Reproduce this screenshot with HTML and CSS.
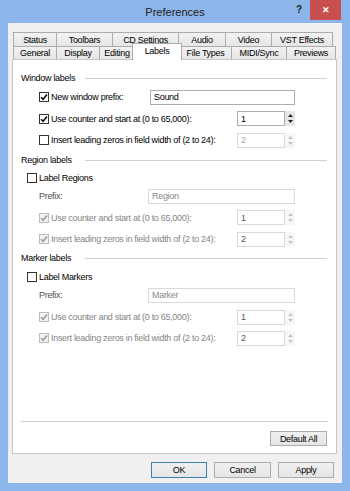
FILE: index.html
```html
<!DOCTYPE html>
<html>
<head>
<meta charset="utf-8">
<title>Preferences</title>
<link rel="stylesheet" href="styles.css">
</head>
<body>
<div class="window">
  <div class="titlebar">
    <div class="title">Preferences</div>
    <div class="ctrls">
      <div class="help">?</div>
      <div class="close">✕</div>
    </div>
  </div>
  <div class="client">
    <div class="tabs">
      <div class="tabrow row1">
        <div class="tab">Status</div>
        <div class="tab">Toolbars</div>
        <div class="tab">CD Settings</div>
        <div class="tab">Audio</div>
        <div class="tab">Video</div>
        <div class="tab">VST Effects</div>
      </div>
      <div class="tabrow row2">
        <div class="tab">General</div>
        <div class="tab">Display</div>
        <div class="tab">Editing</div>
        <div class="tab sel">Labels</div>
        <div class="tab">File Types</div>
        <div class="tab">MIDI/Sync</div>
        <div class="tab">Previews</div>
      </div>
    </div>
    <div class="panel">
      <div class="grid">
        <div class="hdr"><span>Window labels</span><i class="line"></i></div>
        <div class="row ind2">
          <span class="cb"><svg viewBox="0 0 8 8" width="8" height="8"><path d="M1 4.2 L3.1 6.3 L7 1.4" /></svg></span>
          <span class="lbl">New window prefix:</span>
          <div class="edit">Sound</div>
        </div>
        <div class="row ind2">
          <span class="cb"><svg viewBox="0 0 8 8" width="8" height="8"><path d="M1 4.2 L3.1 6.3 L7 1.4" /></svg></span>
          <span class="lbl">Use counter and start at (0 to 65,000):</span>
          <div class="spin"><div class="val">1</div><div class="arr"><svg viewBox="0 0 5 3" width="5" height="3"><path d="M0 3 L2.5 0 L5 3 Z"/></svg><svg viewBox="0 0 5 3" width="5" height="3"><path d="M0 0 L2.5 3 L5 0 Z"/></svg></div></div>
        </div>
        <div class="row ind2">
          <span class="cb"></span>
          <span class="lbl">Insert leading zeros in field width of (2 to 24):</span>
          <div class="spin dis light"><div class="val">2</div><div class="arr"><svg viewBox="0 0 5 3" width="5" height="3"><path d="M0 3 L2.5 0 L5 3 Z"/></svg><svg viewBox="0 0 5 3" width="5" height="3"><path d="M0 0 L2.5 3 L5 0 Z"/></svg></div></div>
        </div>

        <div class="hdr"><span>Region labels</span><i class="line"></i></div>
        <div class="row ind1">
          <span class="cb"></span>
          <span class="lbl">Label Regions</span>
        </div>
        <div class="row ind2">
          <span class="lbl semi">Prefix:</span>
          <div class="edit dis wide">Region</div>
        </div>
        <div class="row ind2">
          <span class="cb dis"><svg viewBox="0 0 8 8" width="8" height="8"><path d="M1 4.2 L3.1 6.3 L7 1.4" /></svg></span>
          <span class="lbl dim">Use counter and start at (0 to 65,000):</span>
          <div class="spin dis"><div class="val">1</div><div class="arr"><svg viewBox="0 0 5 3" width="5" height="3"><path d="M0 3 L2.5 0 L5 3 Z"/></svg><svg viewBox="0 0 5 3" width="5" height="3"><path d="M0 0 L2.5 3 L5 0 Z"/></svg></div></div>
        </div>
        <div class="row ind2">
          <span class="cb dis"><svg viewBox="0 0 8 8" width="8" height="8"><path d="M1 4.2 L3.1 6.3 L7 1.4" /></svg></span>
          <span class="lbl dim">Insert leading zeros in field width of (2 to 24):</span>
          <div class="spin dis"><div class="val">2</div><div class="arr"><svg viewBox="0 0 5 3" width="5" height="3"><path d="M0 3 L2.5 0 L5 3 Z"/></svg><svg viewBox="0 0 5 3" width="5" height="3"><path d="M0 0 L2.5 3 L5 0 Z"/></svg></div></div>
        </div>

        <div class="hdr"><span>Marker labels</span><i class="line"></i></div>
        <div class="row ind1">
          <span class="cb"></span>
          <span class="lbl">Label Markers</span>
        </div>
        <div class="row ind2">
          <span class="lbl semi">Prefix:</span>
          <div class="edit dis wide">Marker</div>
        </div>
        <div class="row ind2">
          <span class="cb dis"><svg viewBox="0 0 8 8" width="8" height="8"><path d="M1 4.2 L3.1 6.3 L7 1.4" /></svg></span>
          <span class="lbl dim">Use counter and start at (0 to 65,000):</span>
          <div class="spin dis"><div class="val">1</div><div class="arr"><svg viewBox="0 0 5 3" width="5" height="3"><path d="M0 3 L2.5 0 L5 3 Z"/></svg><svg viewBox="0 0 5 3" width="5" height="3"><path d="M0 0 L2.5 3 L5 0 Z"/></svg></div></div>
        </div>
        <div class="row ind2">
          <span class="cb dis"><svg viewBox="0 0 8 8" width="8" height="8"><path d="M1 4.2 L3.1 6.3 L7 1.4" /></svg></span>
          <span class="lbl dim">Insert leading zeros in field width of (2 to 24):</span>
          <div class="spin dis"><div class="val">2</div><div class="arr"><svg viewBox="0 0 5 3" width="5" height="3"><path d="M0 3 L2.5 0 L5 3 Z"/></svg><svg viewBox="0 0 5 3" width="5" height="3"><path d="M0 0 L2.5 3 L5 0 Z"/></svg></div></div>
        </div>
      </div>
      <div class="foot">
        <div class="sep"></div>
        <div class="fbtns"><button class="btn dflt">Default All</button></div>
      </div>
    </div>
    <div class="btns">
      <button class="btn def">OK</button>
      <button class="btn cancel">Cancel</button>
      <button class="btn">Apply</button>
    </div>
  </div>
</div>
</body>
</html>
```

FILE: styles.css
```css
html, body {
  margin: 0;
  padding: 0;
}
body {
  font-family: "Liberation Sans", Arial, sans-serif;
  font-size: 9px;
  letter-spacing: -0.3px;
  color: #000;
  background: #fff;
}
.window {
  width: 350px;
  height: 491px;
  box-sizing: border-box;
  background: #8cb5e9;
  display: flex;
  flex-direction: column;
}
.titlebar {
  height: 23px;
  display: grid;
  flex: none;
}
.title {
  grid-area: 1 / 1;
  justify-self: center;
  align-self: center;
  font-size: 11px;
  letter-spacing: 0;
  color: #222;
  margin-top: 1px;
}
.ctrls {
  grid-area: 1 / 1;
  justify-self: end;
  align-self: start;
  display: flex;
  align-items: flex-start;
  margin-right: 9px;
}
.help {
  font-weight: bold;
  font-size: 10px;
  letter-spacing: 0;
  color: #222;
  margin: 4px 8px 0 0;
}
.close {
  width: 31px;
  height: 20px;
  background: #c7504f;
  color: #fff;
  font-size: 9px;
  font-weight: bold;
  letter-spacing: 0;
  display: flex;
  align-items: center;
  justify-content: center;
}
.client {
  flex: 1;
  margin: 0 8px 8px;
  background: #f0f0f0;
  padding: 9px 5px 0 3px;
  display: flex;
  flex-direction: column;
  border-left: 1px solid #e6eef7;
  box-sizing: border-box;
}
.tabs {
  margin-left: 1px;
}
.tabrow {
  display: grid;
}
.row1 {
  grid-template-columns: 44px 56px 66px 47px 46px 61px;
  height: 14px;
}
.row2 {
  grid-template-columns: 44px 43px 35px 45px 52px 55px 49px;
  height: 13px;
}
.tab {
  box-sizing: border-box;
  border-top: 1px solid #acacac;
  border-right: 1px solid #acacac;
  background: linear-gradient(#f2f2f2, #e6e6e6);
  text-align: center;
  display: flex;
  align-items: center;
  justify-content: center;
  white-space: nowrap;
}
.tab:first-child {
  border-left: 1px solid #acacac;
}
.tab.sel {
  background: #fff;
  border-left: 1px solid #acacac;
  margin: -3px -2px -1px -3px;
  padding-bottom: 3px;
  position: relative;
  z-index: 1;
}
.panel {
  height: 395px;
  box-sizing: border-box;
  border: 1px solid #c6c6c6;
  background: #fff;
  padding: 10px 9px 7px 8px;
  display: flex;
  flex-direction: column;
}
.grid {
  display: grid;
  grid-template-rows: 16px 22px 21px 22px 18px 18px 18px 25px 18px 20px 18px 18px 26px 16px;
}
.hdr {
  display: grid;
  grid-template-columns: 64px 1fr;
  align-items: center;
}
.line {
  height: 1px;
  background: #d0d0d0;
}
.row {
  display: flex;
  align-items: center;
  padding-right: 32px;
}
.ind1 { padding-left: 6px; }
.ind2 { padding-left: 18px; }
.cb {
  width: 10px;
  height: 10px;
  box-sizing: border-box;
  border: 1px solid #333;
  background: #fff;
  margin-right: 2px;
  display: flex;
  align-items: center;
  justify-content: center;
  flex: none;
}
.cb svg path {
  fill: none;
  stroke: #111;
  stroke-width: 1.6;
}
.cb.dis {
  border-color: #bcbcbc;
  background: #f2f2f2;
}
.cb.dis svg path {
  stroke: #9c9c9c;
}
.lbl {
  white-space: nowrap;
}
.lbl.dim {
  color: #858585;
}
.lbl.semi {
  color: #505050;
}
.edit {
  margin-left: auto;
  width: 145px;
  height: 15px;
  box-sizing: border-box;
  border: 1px solid #abadb3;
  background: #fff;
  padding-left: 3px;
  display: flex;
  align-items: center;
}
.edit.wide {
  width: 147px;
}
.edit.dis {
  border-color: #d9d9d9;
  color: #8a8a8a;
}
.spin {
  margin-left: auto;
  width: 58px;
  height: 15px;
  display: flex;
}
.spin .val {
  flex: 1;
  box-sizing: border-box;
  border: 1px solid #abadb3;
  padding-left: 3px;
  display: flex;
  align-items: center;
}
.spin .arr {
  width: 10px;
  display: flex;
  flex-direction: column;
  align-items: center;
  justify-content: space-evenly;
  background: #e6e6e6;
}
.spin .arr path {
  fill: #222;
}
.spin.dis .val {
  border-color: #d9d9d9;
  color: #555;
}
.spin.dis.light .val {
  color: #a8a8a8;
}
.spin.dis .arr {
  background: #f7f7f7;
}
.spin.dis .arr path {
  fill: #c4c4c4;
}
.foot {
  margin-top: auto;
}
.sep {
  height: 1px;
  background: #d0d0d0;
  margin-right: -1px;
}
.fbtns {
  display: flex;
  justify-content: flex-end;
  margin-top: 9px;
}
.btn {
  width: 56px;
  height: 16px;
  box-sizing: border-box;
  border: 1px solid #adadad;
  background: linear-gradient(#f0f0f0, #e5e5e5);
  font-family: "Liberation Sans", Arial, sans-serif;
  font-size: 9px;
  letter-spacing: -0.3px;
  color: #000;
  padding: 0;
  margin: 0;
}
.btn.dflt {
  width: 57px;
  height: 15px;
}
.btn.def {
  border-color: #3c7fb1;
}
.btn.cancel {
  width: 57px;
}
.btns {
  display: flex;
  justify-content: flex-end;
  gap: 7px;
  margin-top: 8px;
  padding-right: 3px;
}
```
